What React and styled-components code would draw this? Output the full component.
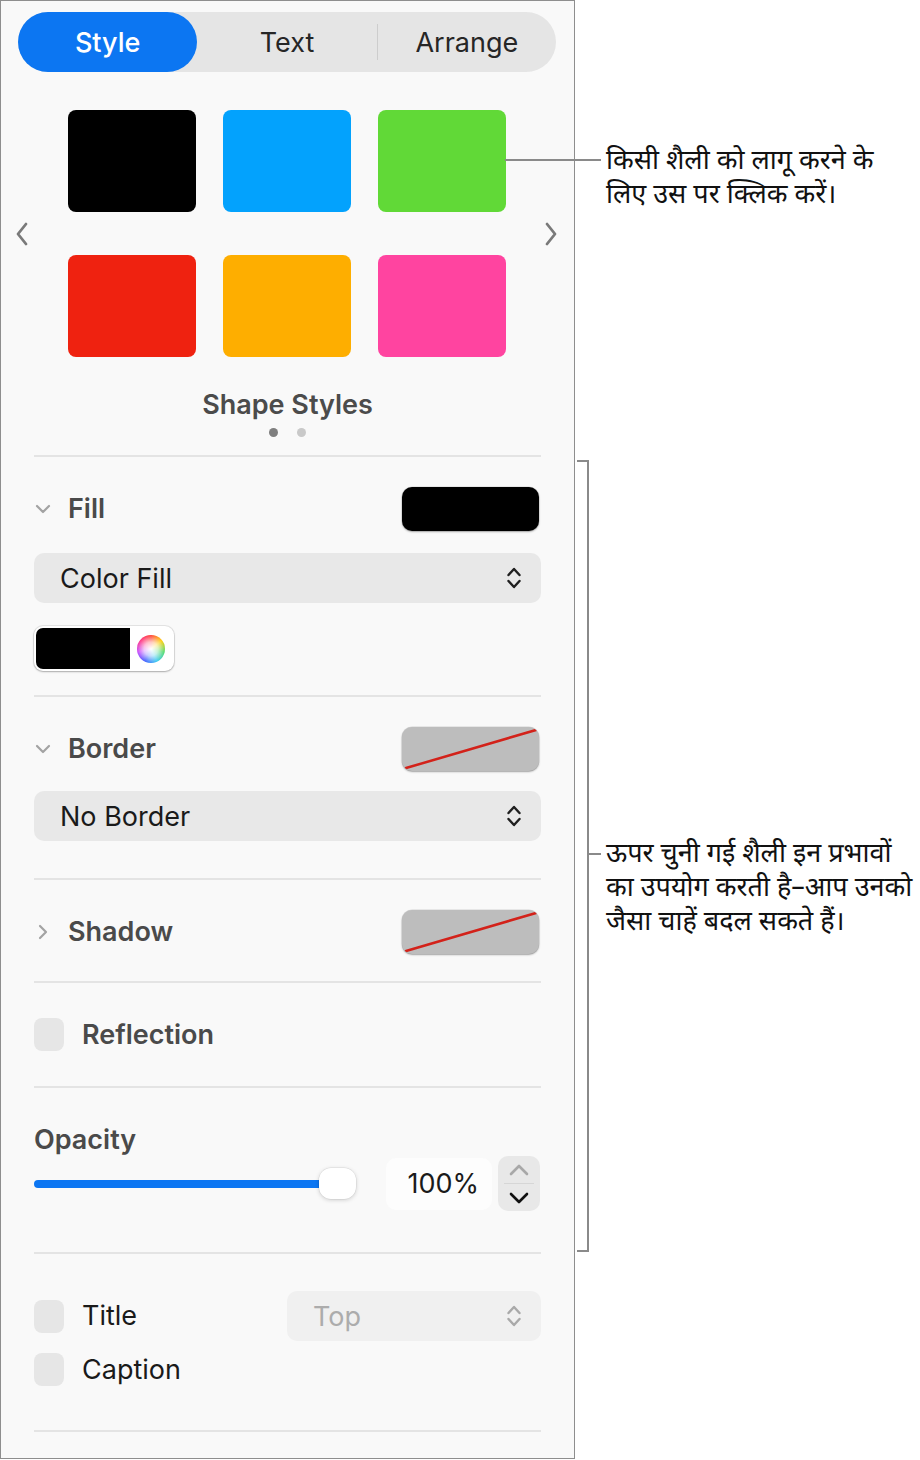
import React from 'react';
import styled, { createGlobalStyle } from 'styled-components';

const GlobalStyle = createGlobalStyle`
  html, body {
    margin: 0;
    padding: 0;
    background: #ffffff;
  }
  body {
    font-family: Inter, "Liberation Sans", sans-serif;
    -webkit-font-smoothing: antialiased;
  }
`;

const swatches = ['#000000', '#03a2fd', '#61d937', '#ef2210', '#feae00', '#ff44a0'];

export default function App() {
  return (
    <Page>
      <GlobalStyle />
      <Panel>
        <Tabs>
          <Tab $active>Style</Tab>
          <Tab>Text</Tab>
          <Tab $divider>Arrange</Tab>
        </Tabs>

        <StyleArea>
          <NavArrow viewBox="0 0 12 24">
            <path d="M10 2 L2 12 L10 22" />
          </NavArrow>
          <SwatchGrid>
            {swatches.map((c) => (
              <Swatch key={c} $color={c} />
            ))}
          </SwatchGrid>
          <NavArrow viewBox="0 0 12 24">
            <path d="M2 2 L10 12 L2 22" />
          </NavArrow>
        </StyleArea>
        <StylesLabel>Shape Styles</StylesLabel>
        <Dots>
          <Dot $on />
          <Dot />
        </Dots>

        <Section $pad="30px 0 24px">
          <HeaderRow>
            <HeaderLeft>
              <Disclosure open />
              <Heading>Fill</Heading>
            </HeaderLeft>
            <ColorButton $color="#000000" />
          </HeaderRow>
          <Popup $mt={22}>
            <span>Color Fill</span>
            <UpDown />
          </Popup>
          <Well>
            <WellColor />
            <WellWheel />
          </Well>
        </Section>

        <Section $pad="30px 0 37px">
          <HeaderRow>
            <HeaderLeft>
              <Disclosure open />
              <Heading>Border</Heading>
            </HeaderLeft>
            <NoneButton />
          </HeaderRow>
          <Popup $mt={20}>
            <span>No Border</span>
            <UpDown />
          </Popup>
        </Section>

        <Section $pad="30px 0 27px">
          <HeaderRow>
            <HeaderLeft>
              <Disclosure />
              <Heading>Shadow</Heading>
            </HeaderLeft>
            <NoneButton />
          </HeaderRow>
        </Section>

        <Section $pad="35px 0 35px">
          <CheckRow>
            <Check />
            <Heading>Reflection</Heading>
          </CheckRow>
        </Section>

        <Section $pad="36px 0 41px">
          <Heading>Opacity</Heading>
          <SliderRow>
            <Slider>
              <SliderFill />
              <Knob />
            </Slider>
            <ValueField>100%</ValueField>
            <Stepper>
              <StepHalf $line>
                <StepIcon viewBox="0 0 20 12" $dim>
                  <path d="M2 10 L10 2 L18 10" />
                </StepIcon>
              </StepHalf>
              <StepHalf>
                <StepIcon viewBox="0 0 20 12">
                  <path d="M2 2 L10 10 L18 2" />
                </StepIcon>
              </StepHalf>
            </Stepper>
          </SliderRow>
        </Section>

        <Section $pad="37px 0 44px">
          <TitleRow>
            <CheckRow>
              <Check />
              <Plain>Title</Plain>
            </CheckRow>
            <Popup $mt={0} $disabled $width={254}>
              <span>Top</span>
              <UpDown dim />
            </Popup>
          </TitleRow>
          <CheckRow $mt={12}>
            <Check />
            <Plain>Caption</Plain>
          </CheckRow>
        </Section>
        <Section $pad="0" />
      </Panel>

      <Leader />

      <Notes>
        <Note $mt={146}>
          किसी शैली को लागू करने के
          <br />
          लिए उस पर क्लिक करें।
        </Note>
        <BracketRow>
          <Bracket />
          <BracketNote>
            <Tick />
            <Note $mt={0}>
              ऊपर चुनी गई शैली इन प्रभावों
              <br />
              का उपयोग करती है–आप उनको
              <br />
              जैसा चाहें बदल सकते हैं।
            </Note>
          </BracketNote>
        </BracketRow>
      </Notes>
    </Page>
  );
}

function Disclosure({ open }) {
  return (
    <DisclosureIcon viewBox="0 0 16 16">
      {open ? <path d="M2 5 L8 11 L14 5" /> : <path d="M5 2 L11 8 L5 14" />}
    </DisclosureIcon>
  );
}

function UpDown({ dim }) {
  return (
    <UpDownIcon viewBox="0 0 16 26" $dim={dim}>
      <path d="M2.5 10 L8 4 L13.5 10" />
      <path d="M2.5 16 L8 22 L13.5 16" />
    </UpDownIcon>
  );
}

function NoneButton() {
  return (
    <ColorButton $color="#bdbdbd">
      <NoneLine viewBox="0 0 137 45" preserveAspectRatio="none">
        <line x1="4" y1="42" x2="134" y2="3" />
      </NoneLine>
    </ColorButton>
  );
}

const Page = styled.div`
  position: relative;
  display: flex;
  width: 920px;
  height: 1460px;
  background: #ffffff;
  overflow: hidden;
`;

const Panel = styled.div`
  box-sizing: border-box;
  flex: none;
  width: 575px;
  height: 1459px;
  border: 1px solid #8e8e8e;
  background: #f9f9f9;
  padding-top: 11px;
  display: flex;
  flex-direction: column;
`;

const Tabs = styled.div`
  display: grid;
  grid-template-columns: repeat(3, 1fr);
  align-items: center;
  height: 60px;
  margin: 0 18px 0 17px;
  border-radius: 30px;
  background: #e5e5e5;
`;

const Tab = styled.div`
  height: ${(p) => (p.$active ? '60px' : '36px')};
  display: flex;
  align-items: center;
  justify-content: center;
  border-radius: 30px;
  font-size: 27px;
  font-weight: ${(p) => (p.$active ? 500 : 400)};
  color: ${(p) => (p.$active ? '#ffffff' : '#262626')};
  background: ${(p) => (p.$active ? '#0c76f2' : 'transparent')};
  border-left: ${(p) => (p.$divider ? '1px solid #cdcdcd' : 'none')};
  ${(p) => p.$divider && 'border-radius: 0;'}
`;

const StyleArea = styled.div`
  display: flex;
  align-items: center;
  justify-content: space-between;
  margin-top: 38px;
  padding: 0 17px 0 15px;
`;

const NavArrow = styled.svg`
  width: 12px;
  height: 24px;
  fill: none;
  stroke: #7a7a7a;
  stroke-width: 2.8;
  stroke-linecap: round;
  stroke-linejoin: round;
`;

const SwatchGrid = styled.div`
  display: grid;
  grid-template-columns: repeat(3, 128px);
  grid-auto-rows: 102px;
  column-gap: 27px;
  row-gap: 43px;
`;

const Swatch = styled.div`
  border-radius: 8px;
  background: ${(p) => p.$color};
`;

const StylesLabel = styled.div`
  margin-top: 32px;
  text-align: center;
  font-size: 27px;
  line-height: 32px;
  font-weight: 600;
  color: #4b4b4b;
`;

const Dots = styled.div`
  display: flex;
  justify-content: center;
  gap: 19px;
  margin-top: 7px;
  margin-bottom: 18px;
`;

const Dot = styled.span`
  width: 9px;
  height: 9px;
  border-radius: 50%;
  background: ${(p) => (p.$on ? '#7f7f7f' : '#c9c9c9')};
`;

const Section = styled.div`
  margin: 0 33px;
  border-top: 2px solid #e4e4e4;
  padding: ${(p) => p.$pad};
  display: flex;
  flex-direction: column;
`;

const HeaderRow = styled.div`
  display: flex;
  align-items: center;
  justify-content: space-between;
  padding-right: 2px;
`;

const HeaderLeft = styled.div`
  display: flex;
  align-items: center;
`;

const DisclosureIcon = styled.svg`
  width: 16px;
  height: 16px;
  margin: 0 17px 0 1px;
  fill: none;
  stroke: #a3a3a3;
  stroke-width: 2.2;
  stroke-linecap: round;
  stroke-linejoin: round;
`;

const Heading = styled.div`
  font-size: 27px;
  line-height: 32px;
  font-weight: 600;
  color: #4a4a4a;
`;

const Plain = styled.div`
  font-size: 27px;
  line-height: 32px;
  color: #1a1a1a;
`;

const ColorButton = styled.div`
  position: relative;
  width: 137px;
  height: 44px;
  border-radius: 10px;
  background: ${(p) => p.$color};
  box-shadow: 0 1px 2px rgba(0, 0, 0, 0.3), 0 0 0 0.5px rgba(0, 0, 0, 0.12);
  overflow: hidden;
`;

const NoneLine = styled.svg`
  position: absolute;
  inset: 0;
  width: 100%;
  height: 100%;
  stroke: #d3221a;
  stroke-width: 2.6;
  stroke-linecap: round;
`;

const Popup = styled.div`
  box-sizing: border-box;
  display: flex;
  align-items: center;
  justify-content: space-between;
  width: ${(p) => (p.$width ? `${p.$width}px` : 'auto')};
  height: 50px;
  margin-top: ${(p) => p.$mt}px;
  padding: 0 19px 0 26px;
  border-radius: 10px;
  background: ${(p) => (p.$disabled ? '#f0f0f0' : '#e8e8e8')};
  font-size: 27px;
  color: ${(p) => (p.$disabled ? '#acacac' : '#1a1a1a')};
`;

const UpDownIcon = styled.svg`
  width: 16px;
  height: 26px;
  fill: none;
  stroke: ${(p) => (p.$dim ? '#a9a9a9' : '#1f1f1f')};
  stroke-width: 2.4;
  stroke-linecap: round;
  stroke-linejoin: round;
`;

const Well = styled.div`
  box-sizing: border-box;
  display: flex;
  align-items: center;
  width: 140px;
  height: 45px;
  margin-top: 23px;
  padding: 2px;
  border-radius: 9px;
  background: #ffffff;
  box-shadow: 0 1px 2px rgba(0, 0, 0, 0.25), 0 0 0 1px rgba(0, 0, 0, 0.08);
`;

const WellColor = styled.div`
  width: 94px;
  height: 100%;
  border-radius: 7px 0 0 7px;
  background: #000000;
`;

const WellWheel = styled.div`
  width: 28px;
  height: 28px;
  margin-left: 7px;
  border-radius: 50%;
  background: radial-gradient(circle, #ffffff 0%, rgba(255, 255, 255, 0.7) 35%, rgba(255, 255, 255, 0) 72%),
    conic-gradient(#ff3b30, #ffcc00, #4cd964, #34c8f0, #3a5bff, #c644fc, #ff2d80, #ff3b30);
`;

const CheckRow = styled.div`
  display: flex;
  align-items: center;
  gap: 18px;
  margin-top: ${(p) => (p.$mt ? `${p.$mt}px` : '0')};
`;

const Check = styled.div`
  width: 30px;
  height: 33px;
  border-radius: 8px;
  background: #e6e6e6;
`;

const SliderRow = styled.div`
  display: flex;
  align-items: center;
  height: 55px;
`;

const Slider = styled.div`
  display: flex;
  align-items: center;
  width: 322px;
  margin-right: 30px;
`;

const SliderFill = styled.div`
  flex: 1;
  height: 8px;
  border-radius: 4px;
  background: #0c76f2;
`;

const Knob = styled.div`
  width: 37px;
  height: 31px;
  margin-left: -8px;
  border-radius: 12px;
  background: #ffffff;
  box-shadow: 0 1px 4px rgba(0, 0, 0, 0.18), 0 0 0 0.5px rgba(0, 0, 0, 0.08);
`;

const ValueField = styled.div`
  box-sizing: border-box;
  width: 106px;
  height: 52px;
  padding-right: 13px;
  border-radius: 10px;
  background: #fdfdfd;
  display: flex;
  align-items: center;
  justify-content: flex-end;
  font-size: 27px;
  color: #1a1a1a;
`;

const Stepper = styled.div`
  display: flex;
  flex-direction: column;
  width: 42px;
  height: 55px;
  margin-left: 6px;
  border-radius: 10px;
  background: #e8e8e8;
  overflow: hidden;
`;

const StepHalf = styled.div`
  flex: 1;
  display: flex;
  align-items: center;
  justify-content: center;
  border-bottom: ${(p) => (p.$line ? '1px solid #d6d6d6' : 'none')};
  margin: ${(p) => (p.$line ? '0 6px' : '0')};
`;

const StepIcon = styled.svg`
  width: 20px;
  height: 12px;
  fill: none;
  stroke: ${(p) => (p.$dim ? '#a8a8a8' : '#111111')};
  stroke-width: 2.6;
  stroke-linecap: round;
  stroke-linejoin: round;
`;

const TitleRow = styled.div`
  display: flex;
  align-items: center;
  justify-content: space-between;
`;

const Leader = styled.div`
  position: absolute;
  left: 505px;
  top: 159px;
  width: 96px;
  height: 2px;
  background: #8a8a8a;
`;

const Notes = styled.div`
  display: flex;
  flex-direction: column;
  flex: 1;
`;

const Note = styled.div`
  margin-top: ${(p) => p.$mt}px;
  padding-left: ${(p) => (p.$mt ? '31px' : '0')};
  font-family: "Noto Sans Devanagari", "Noto Sans", "Lohit Devanagari", FreeSans, sans-serif;
  font-size: 27px;
  line-height: 34px;
  color: #111111;
  white-space: nowrap;
`;

const BracketRow = styled.div`
  display: flex;
  margin-top: 246px;
`;

const Bracket = styled.div`
  width: 10px;
  height: 788px;
  margin-left: 2px;
  border: 2px solid #8a8a8a;
  border-left: none;
`;

const BracketNote = styled.div`
  display: flex;
  align-items: flex-start;
  margin-top: 379px;
`;

const Tick = styled.div`
  width: 12px;
  height: 2px;
  margin-top: 14px;
  margin-right: 5px;
  background: #8a8a8a;
`;
